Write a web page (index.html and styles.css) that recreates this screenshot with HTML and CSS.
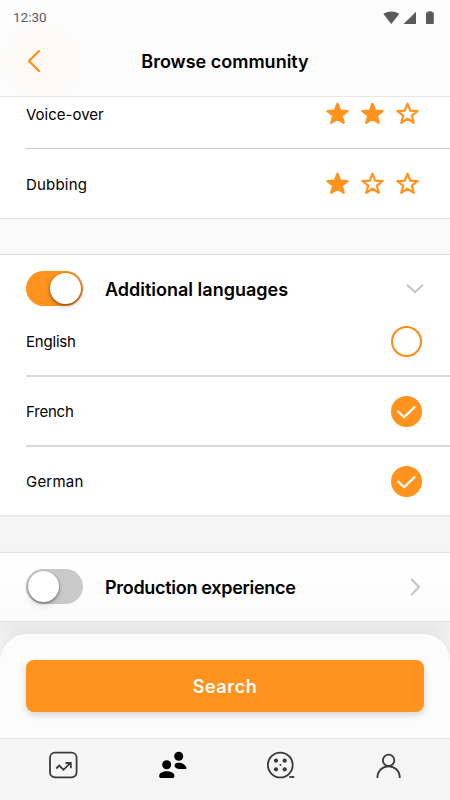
FILE: index.html
```html
<!DOCTYPE html>
<html lang="en">
<head>
    <meta charset="UTF-8">
    <meta name="viewport" content="width=device-width, initial-scale=1.0">
    <title>Browse community</title>

    <link rel="stylesheet" href="styles.css">
</head>

<body>
    <!-- Shared shapes -->
    <svg class="sprite" width="0" height="0">
        <symbol id="star" viewBox="0 0 24 24">
            <path d="M12 1.800l2.800 7.300 7.700.4-6 4.700 2 7.500-6.500-4.200-6.500 4.200 2-7.500-6-4.700 7.700-.4z"/>
        </symbol>
        <symbol id="check" viewBox="0 0 31 31">
            <path d="M7.4 15.7l5.700 5.600 10.400-10.200"/>
        </symbol>
    </svg>

    <div class="screen">
        <!-- Status bar and page title -->
        <header class="header">
            <div class="status-bar">
                <span class="time">12:30</span>
                <svg class="status-icons" width="52" height="14" viewBox="0 0 52 14">
                    <path d="M.3 2.8Q8.3-1.6 16.3 2.8L8.3 13z"/>
                    <path d="M33 .7V13H20.5z"/>
                    <path d="M43 2q0-.8.8-.8h1.4V.2h3.6v1h1.2q.8 0 .8.8v10.2q0 .8-.8.8h-6.2q-.8 0-.8-.8z"/>
                </svg>
            </div>
            <div class="title-bar">
                <a class="back" href="#" aria-label="Back">
                    <svg width="14" height="24" viewBox="0 0 14 24"><path d="M12 2L2 12l10 10"/></svg>
                </a>
                <h1>Browse community</h1>
            </div>
        </header>

        <main class="content">
            <!-- Skill ratings -->
            <section class="ratings">
                <div class="row">
                    <span class="label">Voice-over</span>
                    <div class="stars">
                        <svg class="star full"><use href="#star"/></svg>
                        <svg class="star full"><use href="#star"/></svg>
                        <svg class="star"><use href="#star"/></svg>
                    </div>
                </div>
                <div class="row">
                    <span class="label wide">Dubbing</span>
                    <div class="stars">
                        <svg class="star full"><use href="#star"/></svg>
                        <svg class="star"><use href="#star"/></svg>
                        <svg class="star"><use href="#star"/></svg>
                    </div>
                </div>
            </section>

            <!-- Languages -->
            <section class="languages">
                <div class="section-head">
                    <span class="toggle on"></span>
                    <h2>Additional languages</h2>
                    <svg class="chevron" width="18" height="18" viewBox="0 0 18 18"><path d="M1.5 5.2L9 12.2l7.5-7"/></svg>
                </div>
                <div class="row">
                    <span class="label narrow">English</span>
                    <span class="radio"></span>
                </div>
                <div class="row">
                    <span class="label narrow">French</span>
                    <span class="radio checked"><svg><use href="#check"/></svg></span>
                </div>
                <div class="row">
                    <span class="label wide">German</span>
                    <span class="radio checked"><svg><use href="#check"/></svg></span>
                </div>
            </section>

            <!-- Production experience -->
            <section class="production">
                <div class="section-head">
                    <span class="toggle"></span>
                    <h2>Production experience</h2>
                    <svg class="chevron" width="18" height="18" viewBox="0 0 18 18"><path d="M5.8 1.5l7.2 7.5-7.2 7.5"/></svg>
                </div>
            </section>
        </main>

        <!-- Search button -->
        <div class="sheet">
            <button type="button">Search</button>
        </div>

        <!-- Bottom navigation -->
        <nav class="nav">
            <a href="#" aria-label="Statistics">
                <svg width="30" height="30" viewBox="0 0 30 30">
                    <rect x="2" y="2.700" width="26.600" height="24.600" rx="5"/>
                    <path d="M8.300 18.500l3-3 4.200 4.300 7-7M17.500 13h5.300v5.300"/>
                </svg>
            </a>
            <a href="#" aria-label="Community">
                <svg class="solid" width="30" height="30" viewBox="0 0 30 30">
                    <circle cx="21.700" cy="6.200" r="4.500"/>
                    <path d="M17.500 15.500c0-3.700 7.500-3 9.500-1 2.200 1.500 3.300 4.600 1.500 4.600H23c-3 0-5.500-1.600-5.500-3.600z"/>
                    <circle cx="9.700" cy="14.800" r="4.500"/>
                    <path d="M2.200 26c0-6.200 15.200-6.200 15.200 0 0 1.200-.5 2-1.500 2H3.700c-1 0-1.500-.8-1.500-2z"/>
                </svg>
            </a>
            <a href="#" aria-label="Projects">
                <svg width="30" height="30" viewBox="0 0 30 30">
                    <circle cx="15.300" cy="15" r="12.400"/>
                    <g class="dots">
                        <circle cx="11" cy="10.700" r="2.100"/>
                        <circle cx="19.700" cy="10.700" r="2.100"/>
                        <circle cx="11" cy="19.300" r="2.100"/>
                        <circle cx="19.700" cy="19.300" r="2.100"/>
                        <circle cx="15.400" cy="15" r="1"/>
                    </g>
                    <path d="M24.300 27h5"/>
                </svg>
            </a>
            <a href="#" aria-label="Profile">
                <svg width="30" height="30" viewBox="0 0 30 30">
                    <circle cx="14.600" cy="10.300" r="5.700"/>
                    <path d="M3.400 28c0-15.600 22.400-15.600 22.400 0"/>
                </svg>
            </a>
        </nav>
    </div>
</body>

</html>
```
FILE: styles.css
```css
* {
    box-sizing: border-box;
}

body {
    margin: 0;
    font-family: Inter, "Open Sans", sans-serif;
    color: #000;
}

svg {
    display: block;
    flex: none;
}

.sprite {
    position: absolute;
}

.screen {
    display: flex;
    flex-direction: column;
    width: 450px;
    height: 800px;
    overflow: hidden;
    background: #f6f6f6;
}

/* Header stays above the scrolled list */
.header {
    position: relative;
    z-index: 1;
    flex: none;
    height: 97px;
    border-bottom: 1px solid #e6e6e6;
    background: radial-gradient(circle at 42px 61px, #fff7f0 0, #fcfcfc 42px);
}

.status-bar {
    display: flex;
    justify-content: space-between;
    height: 34px;
    padding: 11px 15px 0 13px;
}

.time {
    margin-top: -1px;
    font: 13.5px/14px Roboto, sans-serif;
    color: #5c5c5c;
}

.status-icons {
    fill: #5a5a5a;
}

.title-bar {
    display: grid;
    grid-template-columns: 60px 1fr 60px;
    align-items: center;
    height: 54px;
}

.back {
    padding-left: 27px;
}

.back path {
    fill: none;
    stroke: #ff8c0e;
    stroke-width: 2;
    stroke-linecap: round;
    stroke-linejoin: round;
}

h1,
h2 {
    margin: 0;
    font-size: 18px;
    font-weight: 600;
    white-space: nowrap;
}

h1 {
    text-align: center;
}

/* List sections */
.content {
    height: 537px;
    flex: none;
    background: linear-gradient(#fafafa 160px, #f5f5f5 420px);
}

section {
    background: #fff;
}

.row {
    display: flex;
    align-items: center;
    justify-content: space-between;
    height: 70px;
    margin-left: 26px;
    padding-right: 28px;
    border-bottom: 1px solid #c7c7c7;
}

.row:last-child {
    margin-left: 0;
    padding-left: 26px;
    border-color: #dcdcdc;
}

.label {
    padding-top: 1px;
    font-size: 15px;
}

.label.wide {
    letter-spacing: 0.2px;
}

.label.narrow {
    letter-spacing: -0.2px;
}

.ratings {
    margin-top: -18px;
    position: relative;
}

.stars {
    display: flex;
    gap: 12px;
    margin-right: 3px;
    padding-bottom: 1px;
}

.star {
    width: 23px;
    height: 23px;
    overflow: visible;
    fill: none;
    stroke: #ff931e;
    stroke-width: 2.3;
    stroke-linejoin: round;
}

.star.full {
    fill: #ff931e;
}

.languages {
    margin-top: 35px;
    border-top: 1px solid #dcdcdc;
}

.languages .row {
    border-bottom: 2px solid #dadada;
}

.languages .row:last-child {
    border-color: #e8e8e8;
}

.section-head {
    display: flex;
    align-items: center;
    height: 52px;
    padding: 16px 26px 1px;
}

.section-head h2 {
    flex: 1;
    margin-left: 22px;
    padding-top: 1px;
}

.production {
    margin-top: 35px;
    border-top: 1px solid #e6e6e6;
    border-bottom: 1px solid #e0e0e0;
    background: linear-gradient(#fff, #fbfbfb);
    box-shadow: 0 10px 14px 4px #ececec;
}

.production .section-head {
    height: 68px;
    padding-bottom: 17px;
}

.production h2 {
    letter-spacing: -0.3px;
}

/* Switches */
.toggle {
    display: flex;
    width: 57px;
    height: 35px;
    padding: 2px;
    border-radius: 18px;
    background: #cacaca;
}

.toggle::before {
    content: "";
    width: 31px;
    height: 31px;
    border-radius: 50%;
    background: #fff;
    box-shadow: 0 1px 3px rgba(0, 0, 0, 0.5), 0 4px 7px rgba(0, 0, 0, 0.1);
}

.toggle.on {
    justify-content: flex-end;
    background: #ff931e;
}

.chevron path {
    fill: none;
    stroke: #c3c3c3;
    stroke-width: 2;
    stroke-linecap: round;
}

.radio {
    width: 31px;
    height: 31px;
    border: 2px solid #ff8c0e;
    border-radius: 50%;
}

.radio.checked {
    border: 0;
    background: #ff931e;
}

.radio svg {
    width: 31px;
    height: 31px;
    fill: none;
    stroke: #fff;
    stroke-width: 2.2;
    stroke-linecap: round;
    stroke-linejoin: round;
}

/* Search panel */
.sheet {
    position: relative;
    flex: none;
    height: 104px;
    padding: 26px;
    border-radius: 27px 27px 0 0;
    background: #fcfcfc;
    box-shadow: 0 0 16px rgba(0, 0, 0, 0.09);
}

button {
    width: 398px;
    height: 52px;
    border: none;
    border-radius: 8px;
    background: #ff931e;
    color: #fff;
    font: 600 18px Inter, sans-serif;
    letter-spacing: 0.6px;
    box-shadow: 0 3px 7px rgba(0, 0, 0, 0.16);
}

/* Bottom navigation */
.nav {
    position: relative;
    display: flex;
    justify-content: space-between;
    height: 62px;
    padding: 11px 46px 0 48px;
    border-top: 1px solid #e6e6e6;
    background: #f5f5f5;
}

.nav svg {
    fill: none;
    stroke: #3a3a3a;
    stroke-width: 1.8;
}

.nav .solid {
    fill: #000;
    stroke: none;
}

.nav .dots {
    fill: #3a3a3a;
    stroke: none;
}
```
